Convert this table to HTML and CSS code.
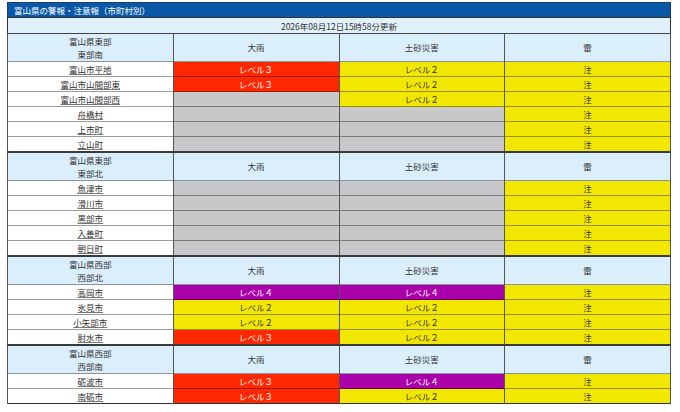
FILE: index.html
```html
<!DOCTYPE html>
<html lang="ja">
<head>
<meta charset="utf-8">
<title>富山県の警報・注意報（市町村別）</title>
<link rel="stylesheet" href="styles.css">
</head>
<body>
<div class="panel">
  <div class="title">富山県の警報・注意報（市町村別）</div>
  <table class="warn">
    <colgroup><col><col><col><col></colgroup>
    <tr class="date"><td colspan="4">2026年08月12日15時58分更新</td></tr>

    <tr class="head first"><th>富山県東部<br>東部南</th><th>大雨</th><th>土砂災害</th><th>雷</th></tr>
    <tr><td class="name"><a href="#">富山市平地</a></td><td class="r">レベル３</td><td class="y">レベル２</td><td class="y">注</td></tr>
    <tr><td class="name"><a href="#">富山市山間部東</a></td><td class="r">レベル３</td><td class="y">レベル２</td><td class="y">注</td></tr>
    <tr><td class="name"><a href="#">富山市山間部西</a></td><td class="g"></td><td class="y">レベル２</td><td class="y">注</td></tr>
    <tr><td class="name"><a href="#">舟橋村</a></td><td class="g"></td><td class="g"></td><td class="y">注</td></tr>
    <tr><td class="name"><a href="#">上市町</a></td><td class="g"></td><td class="g"></td><td class="y">注</td></tr>
    <tr><td class="name"><a href="#">立山町</a></td><td class="g"></td><td class="g"></td><td class="y">注</td></tr>

    <tr class="head"><th>富山県東部<br>東部北</th><th>大雨</th><th>土砂災害</th><th>雷</th></tr>
    <tr><td class="name"><a href="#">魚津市</a></td><td class="g"></td><td class="g"></td><td class="y">注</td></tr>
    <tr><td class="name"><a href="#">滑川市</a></td><td class="g"></td><td class="g"></td><td class="y">注</td></tr>
    <tr><td class="name"><a href="#">黒部市</a></td><td class="g"></td><td class="g"></td><td class="y">注</td></tr>
    <tr><td class="name"><a href="#">入善町</a></td><td class="g"></td><td class="g"></td><td class="y">注</td></tr>
    <tr><td class="name"><a href="#">朝日町</a></td><td class="g"></td><td class="g"></td><td class="y">注</td></tr>

    <tr class="head"><th>富山県西部<br>西部北</th><th>大雨</th><th>土砂災害</th><th>雷</th></tr>
    <tr><td class="name"><a href="#">高岡市</a></td><td class="p">レベル４</td><td class="p">レベル４</td><td class="y">注</td></tr>
    <tr><td class="name"><a href="#">氷見市</a></td><td class="y">レベル２</td><td class="y">レベル２</td><td class="y">注</td></tr>
    <tr><td class="name"><a href="#">小矢部市</a></td><td class="y">レベル２</td><td class="y">レベル２</td><td class="y">注</td></tr>
    <tr><td class="name"><a href="#">射水市</a></td><td class="r">レベル３</td><td class="y">レベル２</td><td class="y">注</td></tr>

    <tr class="head"><th>富山県西部<br>西部南</th><th>大雨</th><th>土砂災害</th><th>雷</th></tr>
    <tr><td class="name"><a href="#">砺波市</a></td><td class="r">レベル３</td><td class="p">レベル４</td><td class="y">注</td></tr>
    <tr><td class="name"><a href="#">南砺市</a></td><td class="r">レベル３</td><td class="y">レベル２</td><td class="y">注</td></tr>
  </table>
</div>
</body>
</html>
```

FILE: styles.css
```css
html, body {
  margin: 0;
  padding: 0;
  background: #ffffff;
}

body {
  font-family: "Noto Sans CJK JP", "Noto Sans", sans-serif;
  font-size: 8.5px;
  color: #333333;
}

.panel {
  margin: 2px 9px 0 7px;
  width: 664px;
}

.title {
  height: 15px;
  line-height: 15px;
  background: #0a58a8;
  color: #ffffff;
  padding-left: 6px;
  border: 1px solid #1b3c6e;
  border-bottom: none;
  box-sizing: border-box;
}

.warn {
  width: 100%;
  border-collapse: collapse;
  table-layout: fixed;
  border: 1px solid #333333;
}

.warn td,
.warn th {
  padding: 0;
  text-align: center;
  font-weight: normal;
  vertical-align: middle;
}

.date td {
  height: 15px;
  line-height: 12px;
  background: #e0f1fc;
  border-bottom: 1px solid #444444;
}

.head th {
  height: 27px;
  line-height: 13px;
  background: #dbeefb;
  border-top: 2px solid #3a3a3a;
  border-left: 1px solid #555555;
  border-right: 1px solid #555555;
}

.head.first th {
  border-top: 1px solid #444444;
}

.warn tr:not(.head):not(.date) td {
  height: 14px;
  line-height: 11px;
  border-top: 1px solid rgba(0, 0, 0, 0.38);
  border-left: 1px solid #555555;
  border-right: 1px solid #555555;
}

.name {
  background: #ffffff;
}

.name a {
  color: #333333;
  text-decoration: underline;
  text-decoration-color: #777777;
  text-underline-offset: 1px;
}

.r {
  background: #ff2800;
  color: #ffffff;
}

.p {
  background: #aa00aa;
  color: #ffffff;
}

.y {
  background: #f2e700;
  color: #333333;
}

.g {
  background: #c8c8cb;
}
```
